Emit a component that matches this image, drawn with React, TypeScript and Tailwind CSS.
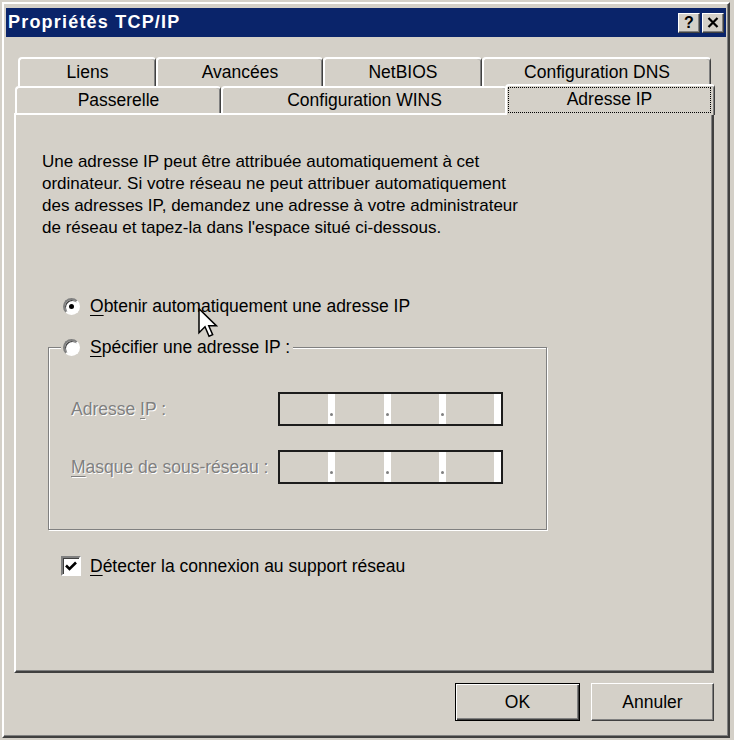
import React from "react";

// Win2000 palette
// face #d4d0c8, light #ffffff, shadow #808080, dark #404040, caption #0a246a

const Tab = ({ label, className }: { label: string; className: string }) => (
  <div
    className={`flex items-center justify-center rounded-t-[4px] border-l-2 border-t-2 border-r border-l-white border-t-white border-r-[#404040] bg-[#d4d0c8] text-[17.5px] text-black shadow-[inset_-1px_0_0_#808080] ${className}`}
  >
    {label}
  </div>
);

const Radio = ({ checked }: { checked?: boolean }) => (
  <div className="relative h-[17px] w-[17px] shrink-0 rounded-full border-2 border-t-[#808080] border-l-[#808080] border-r-white border-b-white bg-white shadow-[inset_1px_1px_0_#404040]">
    {checked && (
      <div className="absolute left-[4px] top-[4px] h-[5px] w-[5px] rounded-full bg-black" />
    )}
  </div>
);

const Checkbox = () => (
  <div className="flex h-[20px] w-[20px] shrink-0 items-center justify-center border-2 border-t-[#808080] border-l-[#808080] border-r-white border-b-white bg-white shadow-[inset_1px_1px_0_#404040]">
    <svg width="14" height="14" viewBox="0 0 14 14">
      <path d="M2 6.5 L5.5 10 L12 3.5" fill="none" stroke="#000" strokeWidth="2.6" />
    </svg>
  </div>
);

const IpBox = () => (
  <div className="flex h-[34px] w-[225px] border-2 border-[#1c1c1c] bg-[#d4d0c8]">
    {[0, 1, 2, 3].map((i) => (
      <React.Fragment key={i}>
        <div className="flex-1" />
        <div className="relative w-[7px] bg-white">
          {i < 3 && (
            <div className="absolute left-[2px] top-[19px] h-[3px] w-[3px] rounded-full bg-[#808080]" />
          )}
        </div>
      </React.Fragment>
    ))}
  </div>
);

const Acc = ({ c }: { c: string }) => (
  <span className="underline decoration-1 underline-offset-[3px]">{c}</span>
);

const disabled = "text-[#808080] [text-shadow:1px_1px_0_#ffffff]";

const App = () => {
  return (
    <div className="relative h-[740px] w-[734px] overflow-hidden bg-[#d4d0c8] pl-[2px] pt-[2px] font-['Liberation_Sans',Arial,sans-serif] text-black">
      <div className="h-[736px] w-[728px] border-2 border-t-white border-l-white border-r-[#404040] border-b-[#404040] shadow-[inset_-1px_-1px_0_#808080]">
        {/* title bar */}
        <div className="mx-[2px] mt-[4px] flex h-[29px] items-center justify-between bg-[#0a246a] pl-[2px] pr-[2px]">
          <span className="text-[18px] font-bold tracking-[1.2px] text-white">
            Propriétés TCP/IP
          </span>
          <div className="flex gap-[2px]">
            <div className="flex h-[20px] w-[22px] items-center justify-center border border-t-white border-l-white border-r-[#404040] border-b-[#404040] bg-[#d4d0c8] text-[16px] font-bold leading-none shadow-[inset_-1px_-1px_0_#808080]">
              ?
            </div>
            <div className="flex h-[20px] w-[22px] items-center justify-center border border-t-white border-l-white border-r-[#404040] border-b-[#404040] bg-[#d4d0c8] shadow-[inset_-1px_-1px_0_#808080]">
              <svg width="12" height="11" viewBox="0 0 12 11">
                <path d="M1.5 1 L10.5 10 M10.5 1 L1.5 10" stroke="#000" strokeWidth="2.2" />
              </svg>
            </div>
          </div>
        </div>

        {/* tabs, back row */}
        <div className="ml-[14px] mt-[20px] flex h-[29px]">
          <Tab label="Liens" className="h-[29px] w-[138px]" />
          <Tab label="Avancées" className="h-[29px] w-[167px]" />
          <Tab label="NetBIOS" className="h-[29px] w-[159px]" />
          <Tab label="Configuration DNS" className="h-[29px] w-[229px]" />
        </div>
        {/* tabs, front row */}
        <div className="ml-[11px] flex h-[27px] items-end">
          <Tab label="Passerelle" className="h-[27px] w-[206px]" />
          <Tab label="Configuration WINS" className="h-[27px] w-[286px]" />
          <div className="relative top-[2px] z-10 -ml-[2px] h-[31px] w-[210px] rounded-t-[4px] border-l-2 border-t-2 border-r border-l-white border-t-white border-r-[#404040] bg-[#d4d0c8] p-[1px] pr-[3px] shadow-[inset_-1px_0_0_#808080]">
            <div className="flex h-[26px] items-center justify-center border border-dotted border-black pb-[2px] text-[17.5px]">
              Adresse IP
            </div>
          </div>
        </div>

        {/* panel */}
        <div className="ml-[10px] h-[560px] w-[700px] border-2 border-t-white border-l-white border-r-[#404040] border-b-[#404040] pl-[26px] pt-[36px] shadow-[inset_-1px_-1px_0_#808080]">
          <p className="text-[17px] leading-[22px]">
            Une adresse IP peut être attribuée automatiquement à cet
            <br />
            ordinateur. Si votre réseau ne peut attribuer automatiquement
            <br />
            des adresses IP, demandez une adresse à votre administrateur
            <br />
            de réseau et tapez-la dans l'espace situé ci-dessous.
          </p>

          <div className="ml-[21px] mt-[55px] flex h-[24px] items-center gap-[10px] text-[17.5px]">
            <Radio checked />
            <span>
              <Acc c="O" />
              btenir automatiquement une adresse IP
            </span>
          </div>

          <div className="relative ml-[6px] mt-[29px] h-[183px] w-[499px] border border-[#808080] pl-[22px] pt-[44px] shadow-[inset_1px_1px_0_#ffffff,1px_1px_0_#ffffff]">
            <div className="absolute -top-[13px] left-[12px] flex h-[24px] items-center gap-[10px] bg-[#d4d0c8] pl-[2px] pr-[3px] text-[17.5px]">
              <Radio />
              <span>
                <Acc c="S" />
                pécifier une adresse IP :
              </span>
            </div>

            <div className="flex h-[34px] items-center">
              <span className={`w-[207px] text-[17.5px] ${disabled}`}>
                Adresse <Acc c="I" />P :
              </span>
              <IpBox />
            </div>
            <div className="mt-[24px] flex h-[34px] items-center">
              <span className={`w-[207px] text-[17.5px] ${disabled}`}>
                <Acc c="M" />
                asque de sous-réseau :
              </span>
              <IpBox />
            </div>
          </div>

          <div className="ml-[19px] mt-[24px] flex h-[24px] items-center gap-[9px] text-[17.5px]">
            <Checkbox />
            <span>
              <Acc c="D" />
              étecter la connexion au support réseau
            </span>
          </div>
        </div>

        {/* buttons */}
        <div className="mt-[10px] flex justify-end gap-[11px] pr-[14px]">
          <button className="flex h-[38px] w-[125px] items-center justify-center border border-black bg-[#d4d0c8] text-[17.5px] shadow-[inset_1px_1px_0_#ffffff,inset_-1px_-1px_0_#404040,inset_-2px_-2px_0_#808080]">
            OK
          </button>
          <button className="flex h-[38px] w-[123px] items-center justify-center border border-t-white border-l-white border-r-[#404040] border-b-[#404040] bg-[#d4d0c8] text-[17.5px] shadow-[inset_-1px_-1px_0_#808080]">
            Annuler
          </button>
        </div>
      </div>

      {/* mouse pointer */}
      <svg
        className="pointer-events-none absolute left-[198px] top-[308px]"
        width="20"
        height="30"
        viewBox="0 0 13 20"
      >
        <path
          d="M0.5 0.5 L0.5 16.5 L4.5 12.5 L7.2 18.8 L9.6 17.8 L7 11.8 L12 11.8 Z"
          fill="#fff"
          stroke="#000"
          strokeWidth="1"
          strokeLinejoin="miter"
        />
      </svg>
    </div>
  );
};

export default App;
